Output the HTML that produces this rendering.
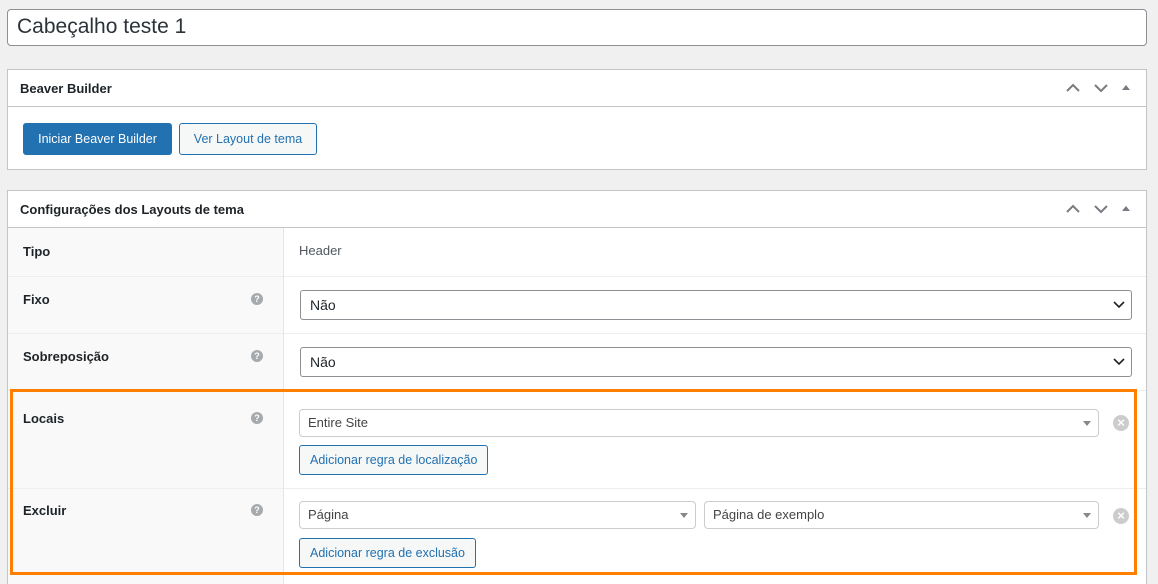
<!DOCTYPE html>
<html style="overflow:hidden;height:584px"><head><meta charset="utf-8"><style>
*{box-sizing:border-box;margin:0;padding:0}
body{width:1158px;height:584px;overflow:hidden;background:#f0f0f1;font-family:"Liberation Sans",sans-serif;color:#1d2327;position:relative;font-size:13px}
.abs{position:absolute}
.title{left:7px;top:9px;width:1140px;height:37px;background:#fff;border:1px solid #8c8f94;border-radius:4px;font-size:21px;padding:5px 9px;color:#2c3338}
.panel{left:7px;width:1140px;background:#fff;border:1px solid #c3c4c7;overflow:hidden}
.ph{height:37px;border-bottom:1px solid #c3c4c7;font-weight:bold;font-size:13px;padding:11px 12px}
.ctl{position:absolute;right:12px;top:11px;width:70px;height:14px}
.btn{position:absolute;height:32px;border-radius:3px;font-size:12.5px;line-height:30px;white-space:nowrap;text-align:center}
.lab{position:absolute;left:0;width:276px;background:#f9f9f9;border-right:1px solid #e5e5e5;border-bottom:1px solid #eee;font-weight:bold;padding-left:15px}
.val{position:absolute;left:276px;right:0;border-bottom:1px solid #eee}
.q{position:absolute;left:243px;width:12px;height:12px;border-radius:50%;background:#a7aaad;color:#fff;font-size:9px;text-align:center;line-height:12px;font-weight:bold}
.sel{position:absolute;height:28px;border:1px solid #8c8f94;border-radius:3px;background:#fff;padding:0 9px;line-height:26px;font-size:14px}
.s2{position:absolute;height:28px;border:1px solid #ccc;border-radius:4px;background:#fff;padding:0 8px;line-height:26px;font-size:13px;color:#444}
.tri{position:absolute;right:7px;top:11px;width:0;height:0;border-left:4px solid transparent;border-right:4px solid transparent;border-top:5px solid #888}
.b2{position:absolute;height:30px;border:1px solid #2271b1;border-radius:3px;background:#f6f7f7;color:#2271b1;padding:0 10px;line-height:28px;font-size:12.5px;white-space:nowrap}
.x{position:absolute;width:16px;height:16px;border-radius:50%;background:#ccc;color:#fff;font-size:13px;font-weight:bold;text-align:center;line-height:16px}
</style></head><body>
<div class="abs title">Cabeçalho teste 1</div>

<div class="abs panel" style="top:69px;height:101px">
 <div class="ph">Beaver Builder</div>
 <svg class="ctl" viewBox="0 0 70 14"><path d="M3 10l6-6 6 6M31 4l6 6 6-6" fill="none" stroke="#787c82" stroke-width="2"/><path d="M58 9l4-5 4 5z" fill="#787c82"/></svg>
 <div class="btn" style="left:15px;top:53px;background:#2271b1;color:#fff;border:1px solid #2271b1;width:149px">Iniciar Beaver Builder</div>
 <div class="btn" style="left:171px;top:53px;background:#f6f7f7;color:#2271b1;border:1px solid #2271b1;width:138px">Ver Layout de tema</div>
</div>

<div class="abs panel" style="top:190px;height:394px;border-bottom:none">
 <div class="ph">Configurações dos Layouts de tema</div>
 <svg class="ctl" viewBox="0 0 70 14"><path d="M3 10l6-6 6 6M31 4l6 6 6-6" fill="none" stroke="#787c82" stroke-width="2"/><path d="M58 9l4-5 4 5z" fill="#787c82"/></svg>
 <div style="position:absolute;top:37px;left:0;right:0;bottom:0">
  <div class="lab" style="top:0;height:49px;line-height:47px">Tipo</div>
  <div class="val" style="top:0;height:49px;line-height:45px;padding-left:15px;color:#50575e">Header</div>

  <div class="lab" style="top:49px;height:57px;line-height:45px">Fixo<div class="q" style="top:16px">?</div></div>
  <div class="val" style="top:49px;height:57px"><div class="sel" style="left:16px;right:14px;top:13px;height:30px;line-height:28px">Não<svg style="position:absolute;right:6px;top:10px" width="12" height="8"><path d="M1 1l5 5 5-5" fill="none" stroke="#1d2327" stroke-width="1.6"/></svg></div></div>

  <div class="lab" style="top:106px;height:57px;line-height:45px">Sobreposição<div class="q" style="top:16px">?</div></div>
  <div class="val" style="top:106px;height:57px"><div class="sel" style="left:16px;right:14px;top:13px;height:30px;line-height:28px">Não<svg style="position:absolute;right:6px;top:10px" width="12" height="8"><path d="M1 1l5 5 5-5" fill="none" stroke="#1d2327" stroke-width="1.6"/></svg></div></div>

  <div class="lab" style="top:163px;height:98px;padding-top:20px">Locais<div class="q" style="top:21px">?</div></div>
  <div class="val" style="top:163px;height:98px">
   <div class="s2" style="left:15px;width:800px;top:18px">Entire Site<div class="tri"></div></div>
   <div class="x" style="left:829px;top:24px">×</div>
   <div class="b2" style="left:15px;top:54px">Adicionar regra de localização</div>
  </div>

  <div class="lab" style="top:261px;height:120px;padding-top:14px">Excluir<div class="q" style="top:15px">?</div></div>
  <div class="val" style="top:261px;height:120px">
   <div class="s2" style="left:15px;width:397px;top:12px">Página<div class="tri"></div></div>
   <div class="s2" style="left:420px;width:395px;top:12px">Página de exemplo<div class="tri"></div></div>
   <div class="x" style="left:829px;top:19px">×</div>
   <div class="b2" style="left:15px;top:49px">Adicionar regra de exclusão</div>
  </div>
 </div>
</div>

<div class="abs" style="left:10px;top:389px;width:1127px;height:186px;border:3px solid #ff7f00"></div>
</body></html>
